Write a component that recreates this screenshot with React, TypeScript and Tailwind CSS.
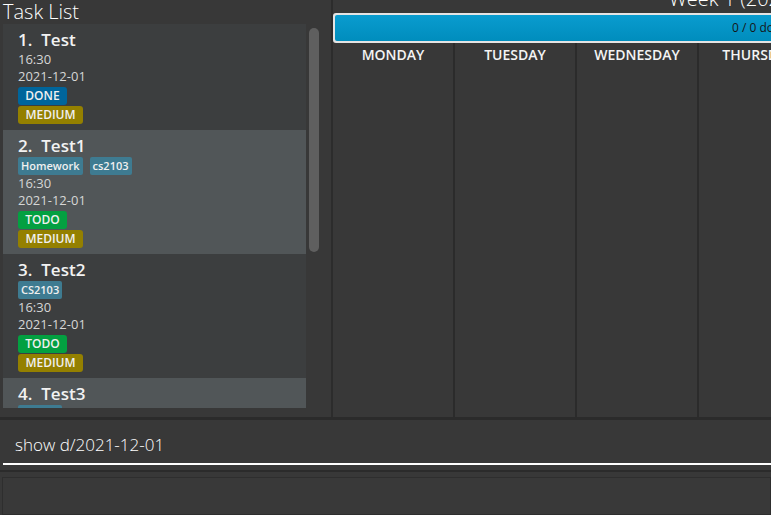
type Task = {
  id: number;
  name: string;
  tags: string[];
  time: string;
  date: string;
  status: 'DONE' | 'TODO';
  priority: string;
};

const tasks: Task[] = [
  { id: 1, name: 'Test', tags: [], time: '16:30', date: '2021-12-01', status: 'DONE', priority: 'MEDIUM' },
  { id: 2, name: 'Test1', tags: ['Homework', 'cs2103'], time: '16:30', date: '2021-12-01', status: 'TODO', priority: 'MEDIUM' },
  { id: 3, name: 'Test2', tags: ['CS2103'], time: '16:30', date: '2021-12-01', status: 'TODO', priority: 'MEDIUM' },
  { id: 4, name: 'Test3', tags: ['CS2103'], time: '16:30', date: '2021-12-01', status: 'TODO', priority: 'MEDIUM' },
];

const days = ['MONDAY', 'TUESDAY', 'WEDNESDAY', 'THURSDAY', 'FRIDAY', 'SATURDAY', 'SUNDAY'];

const TaskCard = ({ task, index }: { task: Task; index: number }) => {
  const odd = index % 2 === 1;
  return (
    <div className={`shrink-0 pl-[15px] pt-[3px] pb-[6px] ${odd ? 'bg-[#515658]' : 'bg-[#3c3e3f]'}`}>
      <div className="h-[24px] text-[17px] leading-[25px] font-semibold text-[#f2f2f2] whitespace-pre">
        {task.id}.  {task.name}
      </div>
      {task.tags.length > 0 && (
        <div className="flex gap-[7px] h-[18px]">
          {task.tags.map((tag) => (
            <span
              key={tag}
              className="h-[18px] px-[3px] rounded-[2px] bg-[#3e7b91] text-[11px] leading-[18px] font-semibold text-[#f0f0f0]"
            >
              {tag}
            </span>
          ))}
        </div>
      )}
      <div className="h-[17px] text-[13px] leading-[17px] text-[#d6d6d6]">{task.time}</div>
      <div className="h-[17px] text-[13px] leading-[17px] text-[#d6d6d6]">{task.date}</div>
      <div className="mt-[2px] flex">
        <span
          className={`h-[18px] w-[49px] text-center rounded-[3px] text-[12px] leading-[18px] font-semibold text-[#f0f0f0] ${
            task.status === 'DONE' ? 'bg-[#00659b]' : 'bg-[#03a041]'
          }`}
        >
          {task.status}
        </span>
      </div>
      <div className="mt-[1px] flex">
        <span className="h-[18px] w-[65px] text-center rounded-[3px] bg-[#948000] text-[12px] leading-[18px] font-semibold text-[#f0f0f0]">
          {task.priority}
        </span>
      </div>
    </div>
  );
};

export default function App() {
  return (
    <div
      className="w-[771px] h-[515px] overflow-hidden bg-[#383838] flex flex-col"
      style={{ fontFamily: '"Open Sans", "Noto Sans", sans-serif' }}
    >
      <div className="h-[417px] flex shrink-0">
        {/* task list panel */}
        <div className="w-[331px] shrink-0 flex flex-col">
          <div className="h-[24px] pl-[3px] text-[20px] leading-[23px] font-light text-white">Task List</div>
          <div className="flex">
            <div className="ml-[3px] w-[303px] h-[384px] overflow-hidden bg-[#3c3e3f] flex flex-col">
              {tasks.map((t, i) => (
                <TaskCard key={t.id} task={t} index={i} />
              ))}
            </div>
            <div className="ml-[3px] mt-[4px] w-[10px] h-[224px] rounded-[5px] bg-[#5f5f5f]" />
          </div>
        </div>
        <div className="w-[2px] shrink-0 bg-[#2c2c2c]" />

        {/* calendar panel */}
        <div className="flex-1 min-w-0 overflow-hidden flex flex-col">
          <div className="h-[13px] shrink-0 overflow-hidden">
            <div className="-mt-[13px] pl-[336px] text-[20px] leading-[24px] font-light text-white whitespace-nowrap">
              Week 1 (2021-11-29 to 2021-12-05)
            </div>
          </div>
          <div className="h-[30px] w-[900px] shrink-0 rounded-[3px] border-2 border-[#e4e4e4] bg-[#e4e4e4]">
            <div className="h-full rounded-[2px] bg-gradient-to-b from-[#0a9ccf] to-[#008dbd] pl-[397px] text-[12px] leading-[26px] text-[#161616] whitespace-nowrap">
              0 / 0 done
            </div>
          </div>
          <div className="flex flex-1">
            {days.map((d) => (
              <div key={d} className="w-[122px] shrink-0 border-r-2 border-[#2b2b2b]">
                <div className="pt-[2px] text-center text-[14px] leading-[20px] font-semibold text-[#f4f4f4] whitespace-nowrap">
                  {d}
                </div>
              </div>
            ))}
          </div>
        </div>
      </div>
      <div className="h-[3px] shrink-0 bg-[#2b2b2b]" />

      {/* command box */}
      <div className="h-[50px] shrink-0 flex flex-col">
        <div className="h-[43px] pl-[15px] pt-[13px] text-[17px] leading-[24px] font-light text-white">show d/2021-12-01</div>
        <div className="ml-[3px] h-[1.5px] bg-white" />
      </div>
      <div className="h-[2px] shrink-0 bg-[#2b2b2b]" />

      {/* result display */}
      <div className="flex-1 pt-[5px] pl-[2px]">
        <div className="h-full border border-[#2e2e2e] bg-[#393939]" />
      </div>
    </div>
  );
}
